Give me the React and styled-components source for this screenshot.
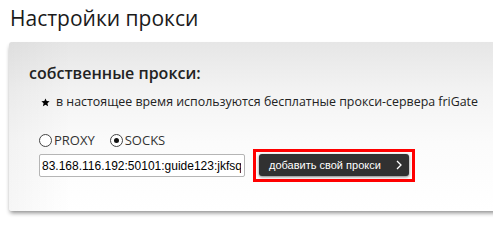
import React, { useState } from 'react'
import styled, { createGlobalStyle } from 'styled-components'

const Global = createGlobalStyle`
  html, body {
    margin: 0;
    padding: 0;
    background: #fff;
    overflow: hidden;
  }
  body {
    font-family: "Open Sans", "Noto Sans", sans-serif;
    color: #222;
  }
`

const Page = styled.div`
  width: 493px;
  height: 226px;
  overflow: hidden;
`

const Title = styled.h1`
  margin: 0;
  padding: 4px 0 0 10px;
  font-size: 21px;
  line-height: 28px;
  font-weight: 400;
  color: #1a1a1a;
`

const Panel = styled.section`
  margin: 10px 0 0 9px;
  width: 520px;
  height: 169px;
  box-sizing: border-box;
  padding: 20px 0 0 20px;
  border-radius: 3px 0 0 3px;
  background:
    linear-gradient(90deg, rgba(0, 0, 0, 0.035), rgba(0, 0, 0, 0) 12%),
    linear-gradient(180deg, #e6e6e6 0%, #f3f3f3 30%, #fbfbfb 60%, #fff 100%);
  box-shadow: 0 3px 4px -1px rgba(0, 0, 0, 0.45);
`

const Heading = styled.h2`
  margin: 0;
  font-size: 16px;
  line-height: 22px;
  font-weight: 600;
  color: #222;
`

const Note = styled.p`
  margin: 9px 0 0 12px;
  display: flex;
  align-items: center;
  gap: 6px;
  font-size: 12.4px;
  line-height: 18px;
  color: #222;
  white-space: nowrap;
`

const Star = styled.svg`
  width: 9px;
  height: 9px;
  flex: none;
  margin-top: 1px;
`

const Form = styled.div`
  margin: 20px 0 0 10px;
  display: flex;
  flex-direction: column;
  gap: 0;
`

const RadioRow = styled.div`
  display: flex;
  align-items: center;
  gap: 15px;
  height: 18px;
`

const RadioLabel = styled.label`
  display: flex;
  align-items: center;
  gap: 2px;
  font-size: 13px;
  color: #333;
  cursor: pointer;
`

const RadioDot = styled.span`
  width: 11px;
  height: 11px;
  border: 1px solid #444;
  border-radius: 50%;
  background: #fff;
  display: flex;
  align-items: center;
  justify-content: center;
  &::after {
    content: '';
    width: 5px;
    height: 5px;
    border-radius: 50%;
    background: ${p => (p.$on ? '#111' : 'transparent')};
  }
`

const InputRow = styled.div`
  display: flex;
  align-items: center;
  gap: 8px;
`

const Field = styled.input`
  width: 206px;
  height: 23px;
  box-sizing: border-box;
  padding: 0 3px 0 2px;
  border: 1px solid #b5b5b5;
  border-radius: 2px;
  font-family: "Liberation Sans", Arial, sans-serif;
  font-size: 12px;
  color: #000;
  background: #fff;
  outline: none;
`

/* red frame around the button, as marked in the screenshot */
const Highlight = styled.span`
  display: inline-flex;
  padding: 2px 3px 3px;
  border: 3px solid #f00;
`

const AddButton = styled.button`
  height: 22px;
  width: 150px;
  box-sizing: border-box;
  display: flex;
  align-items: center;
  justify-content: space-between;
  padding: 0 7px 0 10px;
  border: none;
  border-radius: 3px;
  background: #313131;
  color: #fff;
  font-family: "Liberation Sans", Arial, sans-serif;
  font-size: 11px;
  box-shadow: 0 1px 3px rgba(0, 0, 0, 0.5);
  cursor: pointer;
`

const Chevron = styled.svg`
  width: 6px;
  height: 10px;
`

export default function App() {
  const [kind, setKind] = useState('socks')
  const [value, setValue] = useState('83.168.116.192:50101:guide123:jkfsq')

  return (
    <Page>
      <Global />
      <Title>Настройки прокси</Title>
      <Panel>
        <Heading>собственные прокси:</Heading>
        <Note>
          <Star viewBox="0 0 24 24">
            <path d="M12 1l3.2 7.2 7.8.7-5.9 5.2 1.8 7.7L12 17.8 5.1 21.8l1.8-7.7L1 8.9l7.8-.7z" fill="#000" />
          </Star>
          в настоящее время используются бесплатные прокси-сервера friGate
        </Note>
        <Form>
          <RadioRow>
            <RadioLabel onClick={() => setKind('proxy')}>
              <RadioDot $on={kind === 'proxy'} />PROXY
            </RadioLabel>
            <RadioLabel onClick={() => setKind('socks')}>
              <RadioDot $on={kind === 'socks'} />SOCKS
            </RadioLabel>
          </RadioRow>
          <InputRow>
            <Field value={value} onChange={e => setValue(e.target.value)} />
            <Highlight>
              <AddButton>
                добавить свой прокси
                <Chevron viewBox="0 0 6 10">
                  <polyline points="1,1 5,5 1,9" fill="none" stroke="#fff" strokeWidth="1.3" />
                </Chevron>
              </AddButton>
            </Highlight>
          </InputRow>
        </Form>
      </Panel>
    </Page>
  )
}
